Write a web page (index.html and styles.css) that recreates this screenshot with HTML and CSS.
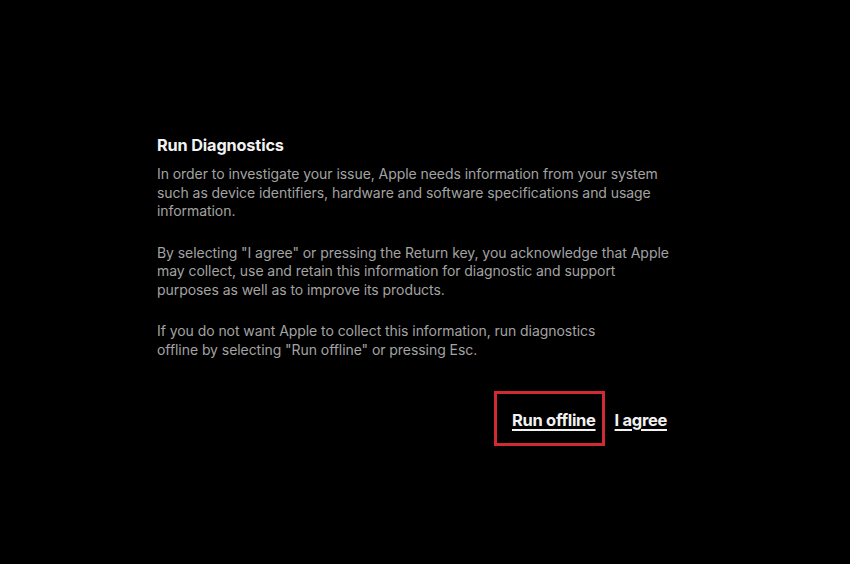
FILE: index.html
```html
<!DOCTYPE html>
<html lang="en">
<head>
<meta charset="utf-8">
<title>Run Diagnostics</title>
<link rel="stylesheet" href="styles.css">
</head>
<body>
<main class="dialog">
  <h1 class="title">Run Diagnostics</h1>
  <p class="text">In order to investigate your issue, Apple needs information from your system<br>such as device identifiers, hardware and software specifications and usage<br>information.</p>
  <p class="text">By selecting "I agree" or pressing the Return key, you acknowledge that Apple<br>may collect, use and retain this information for diagnostic and support<br>purposes as well as to improve its products.</p>
  <p class="text">If you do not want Apple to collect this information, run diagnostics<br>offline by selecting "Run offline" or pressing Esc.</p>
  <div class="actions">
    <span class="btn highlighted">Run offline</span>
    <span class="btn">I agree</span>
  </div>
</main>
</body>
</html>
```

FILE: styles.css
```css
html, body {
  margin: 0;
  padding: 0;
  background: #000;
  height: 100%;
}
body {
  font-family: Inter, "Liberation Sans", sans-serif;
}
.dialog {
  width: 512px;
  padding: 134px 0 0 157px;
  display: flex;
  flex-direction: column;
}
.title {
  margin: 0 0 9px 0;
  font-size: 16.3px;
  font-weight: 700;
  line-height: 22px;
  color: #f2f2f2;
  letter-spacing: -0.15px;
}
.text {
  margin: 0 0 22.5px 0;
  font-size: 14px;
  line-height: 18.7px;
  color: #a3a3a3;
  letter-spacing: -0.06px;
  white-space: nowrap;
}
.actions {
  display: flex;
  justify-content: flex-end;
  align-items: baseline;
  gap: 10px;
  margin-top: 8.5px;
  padding-right: 2px;
}
.btn {
  font-size: 16.5px;
  font-weight: 700;
  color: #f2f2f2;
  text-decoration: underline;
  text-underline-offset: 3px;
  text-decoration-thickness: 1.5px;
  letter-spacing: -0.3px;
}
.highlighted {
  border: 3px solid #d12a33;
  padding: 16px 6px 13px 15px;
}
```
